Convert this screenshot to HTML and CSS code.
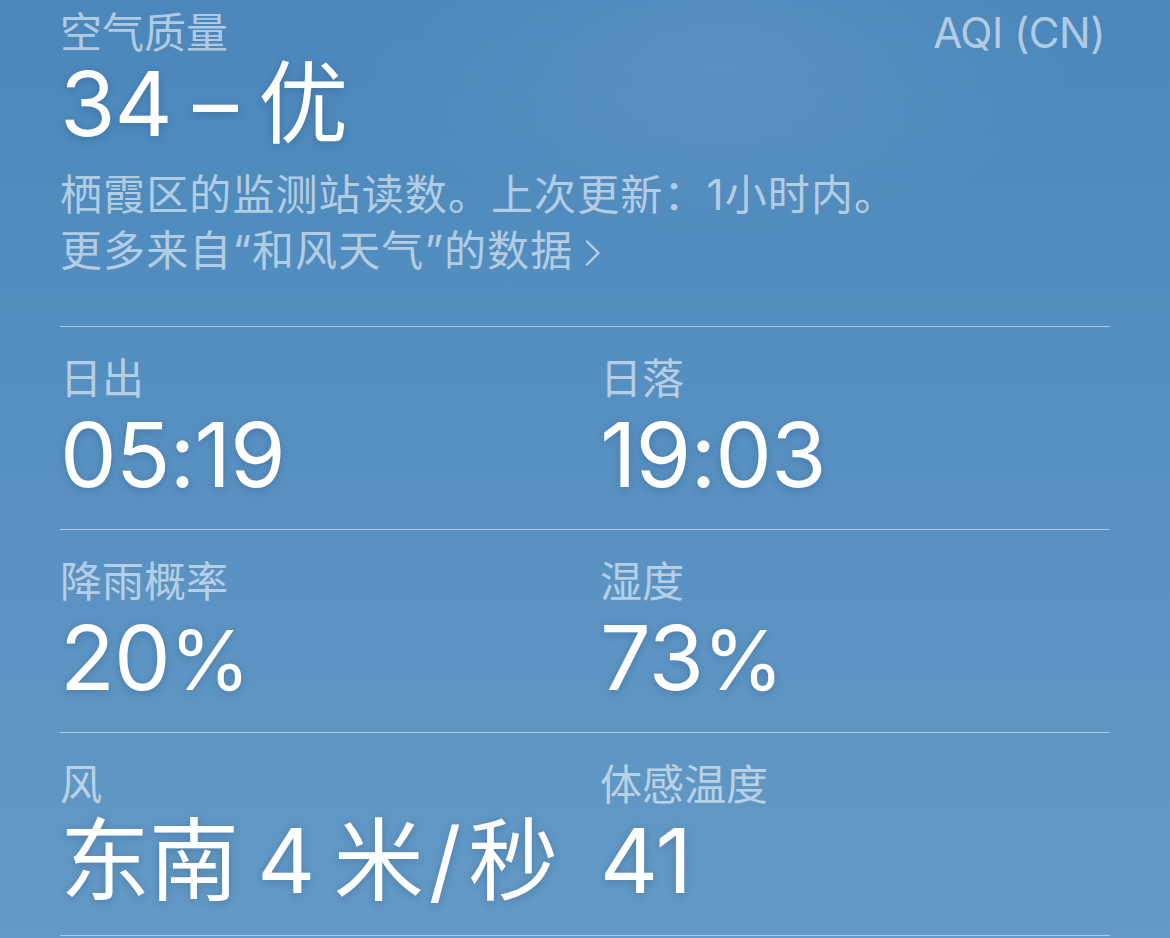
FILE: index.html
```html
<!DOCTYPE html>
<html lang="zh-CN">
<head>
<meta charset="utf-8">
<title>天气详情</title>
<link rel="stylesheet" href="styles.css">
</head>
<body>
<main class="panel">
  <section class="aqi">
    <div class="aqi-head">
      <span class="label">空气质量</span>
      <span class="label aqi-scale">AQI (CN)</span>
    </div>
    <div class="value aqi-value">34 – 优</div>
    <p class="note">栖霞区的监测站读数。上次更新：1小时内。</p>
    <p class="note">更多来自“和风天气”的数据<svg class="chev" width="16" height="26" viewBox="0 0 16 26"><path d="M2 1.5 L13.5 13 L2 24.5" fill="none" stroke="currentColor" stroke-width="2.4" stroke-linecap="round" stroke-linejoin="round"/></svg></p>
  </section>
  <section class="row">
    <div class="cell"><div class="label">日出</div><div class="value">05:19</div></div>
    <div class="cell"><div class="label">日落</div><div class="value">19:03</div></div>
  </section>
  <section class="row">
    <div class="cell"><div class="label">降雨概率</div><div class="value">20<span class="pct">%</span></div></div>
    <div class="cell"><div class="label">湿度</div><div class="value">73<span class="pct">%</span></div></div>
  </section>
  <section class="row">
    <div class="cell"><div class="label">风</div><div class="value wind">东南 4 米<span class="slash">/</span>秒</div></div>
    <div class="cell"><div class="label">体感温度</div><div class="value">41</div></div>
  </section>
</main>
</body>
</html>
```

FILE: styles.css
```css
html, body {
  margin: 0;
  padding: 0;
}
body {
  width: 1170px;
  height: 938px;
  overflow: hidden;
  background:
    radial-gradient(ellipse 520px 260px at 720px 60px, rgba(255,255,255,0.07), rgba(255,255,255,0) 70%),
    linear-gradient(180deg, #4b87bb 0%, #5690c1 45%, #6399c5 100%);
  font-family: "Inter", "Noto Sans CJK SC", sans-serif;
  color: #fff;
}
.panel {
  padding: 7px 60px 0;
}
.label {
  font-size: 42px;
  line-height: 52px;
  color: rgba(255, 255, 255, 0.58);
}
.value {
  font-size: 90px;
  line-height: 90px;
  letter-spacing: -1px;
  color: #fff;
  text-shadow: 0 2px 8px rgba(0, 30, 70, 0.2);
}
.pct {
  font-size: 82px;
}
.wind {
  word-spacing: -5px;
}
.slash {
  margin: 0 8px 0 6px;
}
.aqi-head {
  display: flex;
  justify-content: space-between;
}
.aqi-scale {
  padding-right: 5px;
  letter-spacing: -0.5px;
}
.note {
  margin: 0;
  font-size: 42px;
  line-height: 56px;
  letter-spacing: 1.1px;
  color: rgba(255, 255, 255, 0.58);
}
.aqi-value {
  margin-bottom: 18px;
  word-spacing: -3px;
}
.aqi {
  padding-bottom: 47px;
  border-bottom: 1px solid rgba(255, 255, 255, 0.5);
}
.chev {
  margin-left: 12px;
  vertical-align: 0px;
}
.row {
  display: grid;
  grid-template-columns: 540px 1fr;
  height: 202px;
  border-bottom: 1px solid rgba(255, 255, 255, 0.5);
}
.cell {
  padding-top: 26px;
}
.cell .value {
  margin-top: 5px;
}
```
